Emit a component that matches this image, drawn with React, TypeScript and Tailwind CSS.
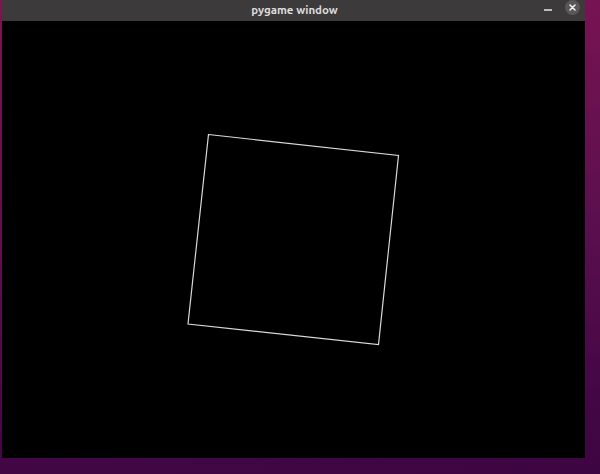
export default function App() {
  return (
    <div className="w-[600px] h-[474px] overflow-hidden bg-[linear-gradient(175deg,#7e1453_0%,#60104f_45%,#440746_85%,#3d0541_100%)] pl-[2px]">
      <div className="w-[583px] h-[458px] flex flex-col">
        <div className="h-[21px] bg-[#3d3a3b] flex items-center relative">
          <div className="flex-1 text-center text-[11.5px] font-bold text-[#dedcdc] font-['Ubuntu','DejaVu_Sans',sans-serif] leading-none pl-[2px] pb-[2px]">
            pygame window
          </div>
          <div className="absolute left-[542px] top-[9px] w-[8px] h-[2px] bg-[#bdbbbb]" />
          <div className="absolute left-[563px] top-[0px] w-[15px] h-[15px] rounded-full bg-[#5a5758] flex items-center justify-center">
            <svg width="7" height="7" viewBox="0 0 7 7">
              <path d="M1 1L6 6M6 1L1 6" stroke="#f2f2f2" strokeWidth="1.5" strokeLinecap="round" />
            </svg>
          </div>
        </div>
        <div className="flex-1 bg-black">
          <svg width="583" height="437" viewBox="0 0 583 437">
            <polygon
              points="206.5,113.5 396.5,134.5 376.5,323.5 186,303"
              fill="none"
              stroke="#d9d9d9"
              strokeWidth="1.2"
            />
          </svg>
        </div>
      </div>
    </div>
  )
}
